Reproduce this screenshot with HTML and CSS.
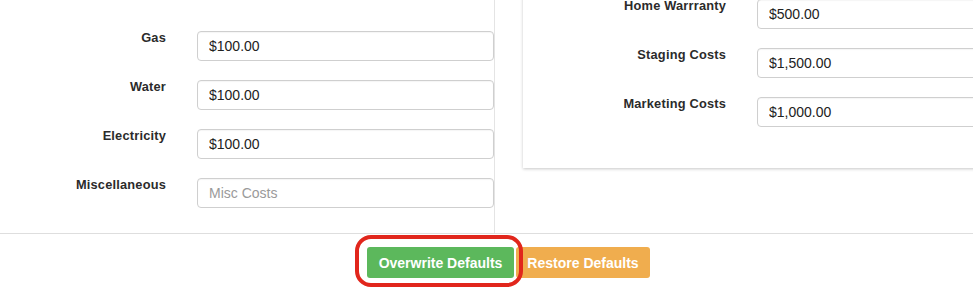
FILE: index.html
```html
<!DOCTYPE html>
<html lang="en">
<head>
<meta charset="utf-8">
<title>Defaults</title>
<link rel="stylesheet" href="styles.css">
</head>
<body>
<div class="main">
  <div class="left">
    <div class="row">
      <label class="lbl">Gas</label>
      <input class="field" type="text" value="$100.00">
    </div>
    <div class="row">
      <label class="lbl">Water</label>
      <input class="field" type="text" value="$100.00">
    </div>
    <div class="row">
      <label class="lbl">Electricity</label>
      <input class="field" type="text" value="$100.00">
    </div>
    <div class="row">
      <label class="lbl">Miscellaneous</label>
      <input class="field" type="text" placeholder="Misc Costs">
    </div>
  </div>
  <div class="right">
    <div class="card">
      <div class="row row-r">
        <label class="lbl">Home Warrranty</label>
        <input class="field" type="text" value="$500.00">
      </div>
      <div class="row row-r">
        <label class="lbl">Staging Costs</label>
        <input class="field" type="text" value="$1,500.00">
      </div>
      <div class="row row-r">
        <label class="lbl">Marketing Costs</label>
        <input class="field" type="text" value="$1,000.00">
      </div>
    </div>
  </div>
</div>
<div class="footer">
  <span class="hl">
    <button class="btn btn-green">Overwrite Defaults</button>
    <span class="ring"></span>
  </span>
  <button class="btn btn-orange">Restore Defaults</button>
</div>
</body>
</html>
```
FILE: styles.css
```css
* { box-sizing: border-box; }
html, body { margin: 0; padding: 0; background: #fff; }
body {
  font-family: "Liberation Sans", Arial, sans-serif;
  color: #333;
  width: 973px;
  height: 287px;
  overflow: hidden;
}
.main {
  display: flex;
  height: 234px;
  border-bottom: 1px solid #dedede;
}
.left {
  width: 495px;
  flex: none;
  border-right: 1px solid #e4e4e4;
  padding-top: 31px;
  display: flex;
  flex-direction: column;
  gap: 19px;
}
.row {
  display: grid;
  grid-template-columns: 166px 297px;
  column-gap: 31px;
  align-items: start;
}
.row-r {
  grid-template-columns: 203px 297px;
}
.lbl {
  text-align: right;
  font-weight: bold;
  font-size: 12.8px;
  line-height: 13px;
  letter-spacing: 0.2px;
  color: #2b2b2b;
  white-space: nowrap;
}
.field {
  height: 30px;
  width: 297px;
  border: 1px solid #cfcfcf;
  border-radius: 4px;
  padding: 0 11px;
  font-family: "Liberation Sans", Arial, sans-serif;
  font-size: 14px;
  color: #222;
  background: #fff;
  box-shadow: inset 0 1px 1px rgba(0,0,0,0.04);
  outline: none;
}
.field::placeholder { color: #9a9a9a; }
.right {
  flex: 1;
  overflow: hidden;
  padding-left: 28px;
}
.card {
  width: 560px;
  margin-top: -20px;
  padding: 19px 0 41px;
  background: #fff;
  box-shadow: 0 1px 3px rgba(0,0,0,0.22);
  display: flex;
  flex-direction: column;
  gap: 19px;
}
.footer {
  display: flex;
  justify-content: center;
  padding-left: 44px;
  padding-top: 13px;
  gap: 2px;
}
.hl { position: relative; display: flex; }
.btn {
  height: 31px;
  border: none;
  border-radius: 3px;
  padding: 0;
  text-align: center;
  white-space: nowrap;
  font-family: "Liberation Sans", Arial, sans-serif;
  font-weight: bold;
  font-size: 14px;
  color: #fff;
  cursor: pointer;
}
.btn-green { background: #5cb85c; width: 147px; }
.btn-orange { background: #f0ad4e; width: 134px; }
.ring {
  position: absolute;
  left: -12px;
  top: -12px;
  right: -9px;
  bottom: -9px;
  border: 4px solid #e1261c;
  border-radius: 16px;
  pointer-events: none;
}
```
